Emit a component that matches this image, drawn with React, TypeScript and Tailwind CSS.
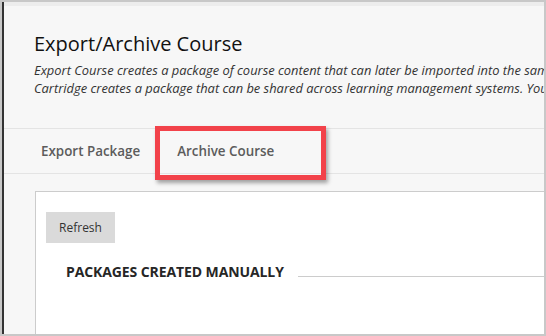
import React from "react";

export default function App() {
  return (
    <div
      className="relative w-[546px] h-[336px] overflow-hidden flex border-2 border-[#c8c8c8] bg-white"
      style={{ fontFamily: '"Open Sans", "Liberation Sans", sans-serif' }}
    >
      <div className="w-[2px] shrink-0 bg-[#333333]" />
      <div className="flex-1 min-w-0 flex flex-col bg-[#f7f7f7] overflow-hidden">
        <div className="h-[4px] shrink-0 bg-[#ededed]" />
        <header className="pl-[30px] pt-[24px] pb-[31px]">
          <h1 className="text-[20px] leading-[28px] text-[#111111] whitespace-nowrap">
            Export/Archive Course
          </h1>
          <p className="mt-[3px] italic text-[12.9px] leading-[18px] text-[#333333] whitespace-nowrap">
            Export Course creates a package of course content that can later be imported into the same course or another course. Common
          </p>
          <p className="italic text-[12.9px] leading-[18px] text-[#333333] whitespace-nowrap">
            Cartridge creates a package that can be shared across learning management systems. You can then import it into another system.
          </p>
        </header>
        <nav className="h-[46px] shrink-0 flex items-center border-t border-b border-[#e4e4e4] pl-[37px] gap-[37px]">
          <span className="text-[13.4px] font-semibold text-[#5c5c5c] whitespace-nowrap">Export Package</span>
          <span className="text-[13.4px] font-semibold text-[#5c5c5c] whitespace-nowrap">Archive Course</span>
        </nav>
        <section className="mt-[17px] ml-[31px] -mr-[10px] flex-1 bg-white border border-[#cccccc] pl-[10px] pt-[20px]">
          <button className="w-[69px] h-[31px] bg-[#dadada] text-[12px] text-[#333333]">Refresh</button>
          <div className="mt-[19px] ml-[20px] flex items-center">
            <h2 className="text-[14px] leading-[20px] font-bold text-[#262626] whitespace-nowrap tracking-[-0.1px]">
              PACKAGES CREATED MANUALLY
            </h2>
            <div className="flex-1 h-px bg-[#cccccc] ml-[14px] mt-[8px]" />
          </div>
          <p className="mt-[48px] ml-[20px] text-[13px] leading-[18px] text-[#333333] whitespace-nowrap">
            There are no packages to display.
          </p>
        </section>
      </div>
      <div className="absolute left-[153px] top-[124px] w-[171px] h-[54px] border-[5px] border-[#f2424a] shadow-[2px_3px_4px_rgba(0,0,0,0.35)]" />
    </div>
  );
}
